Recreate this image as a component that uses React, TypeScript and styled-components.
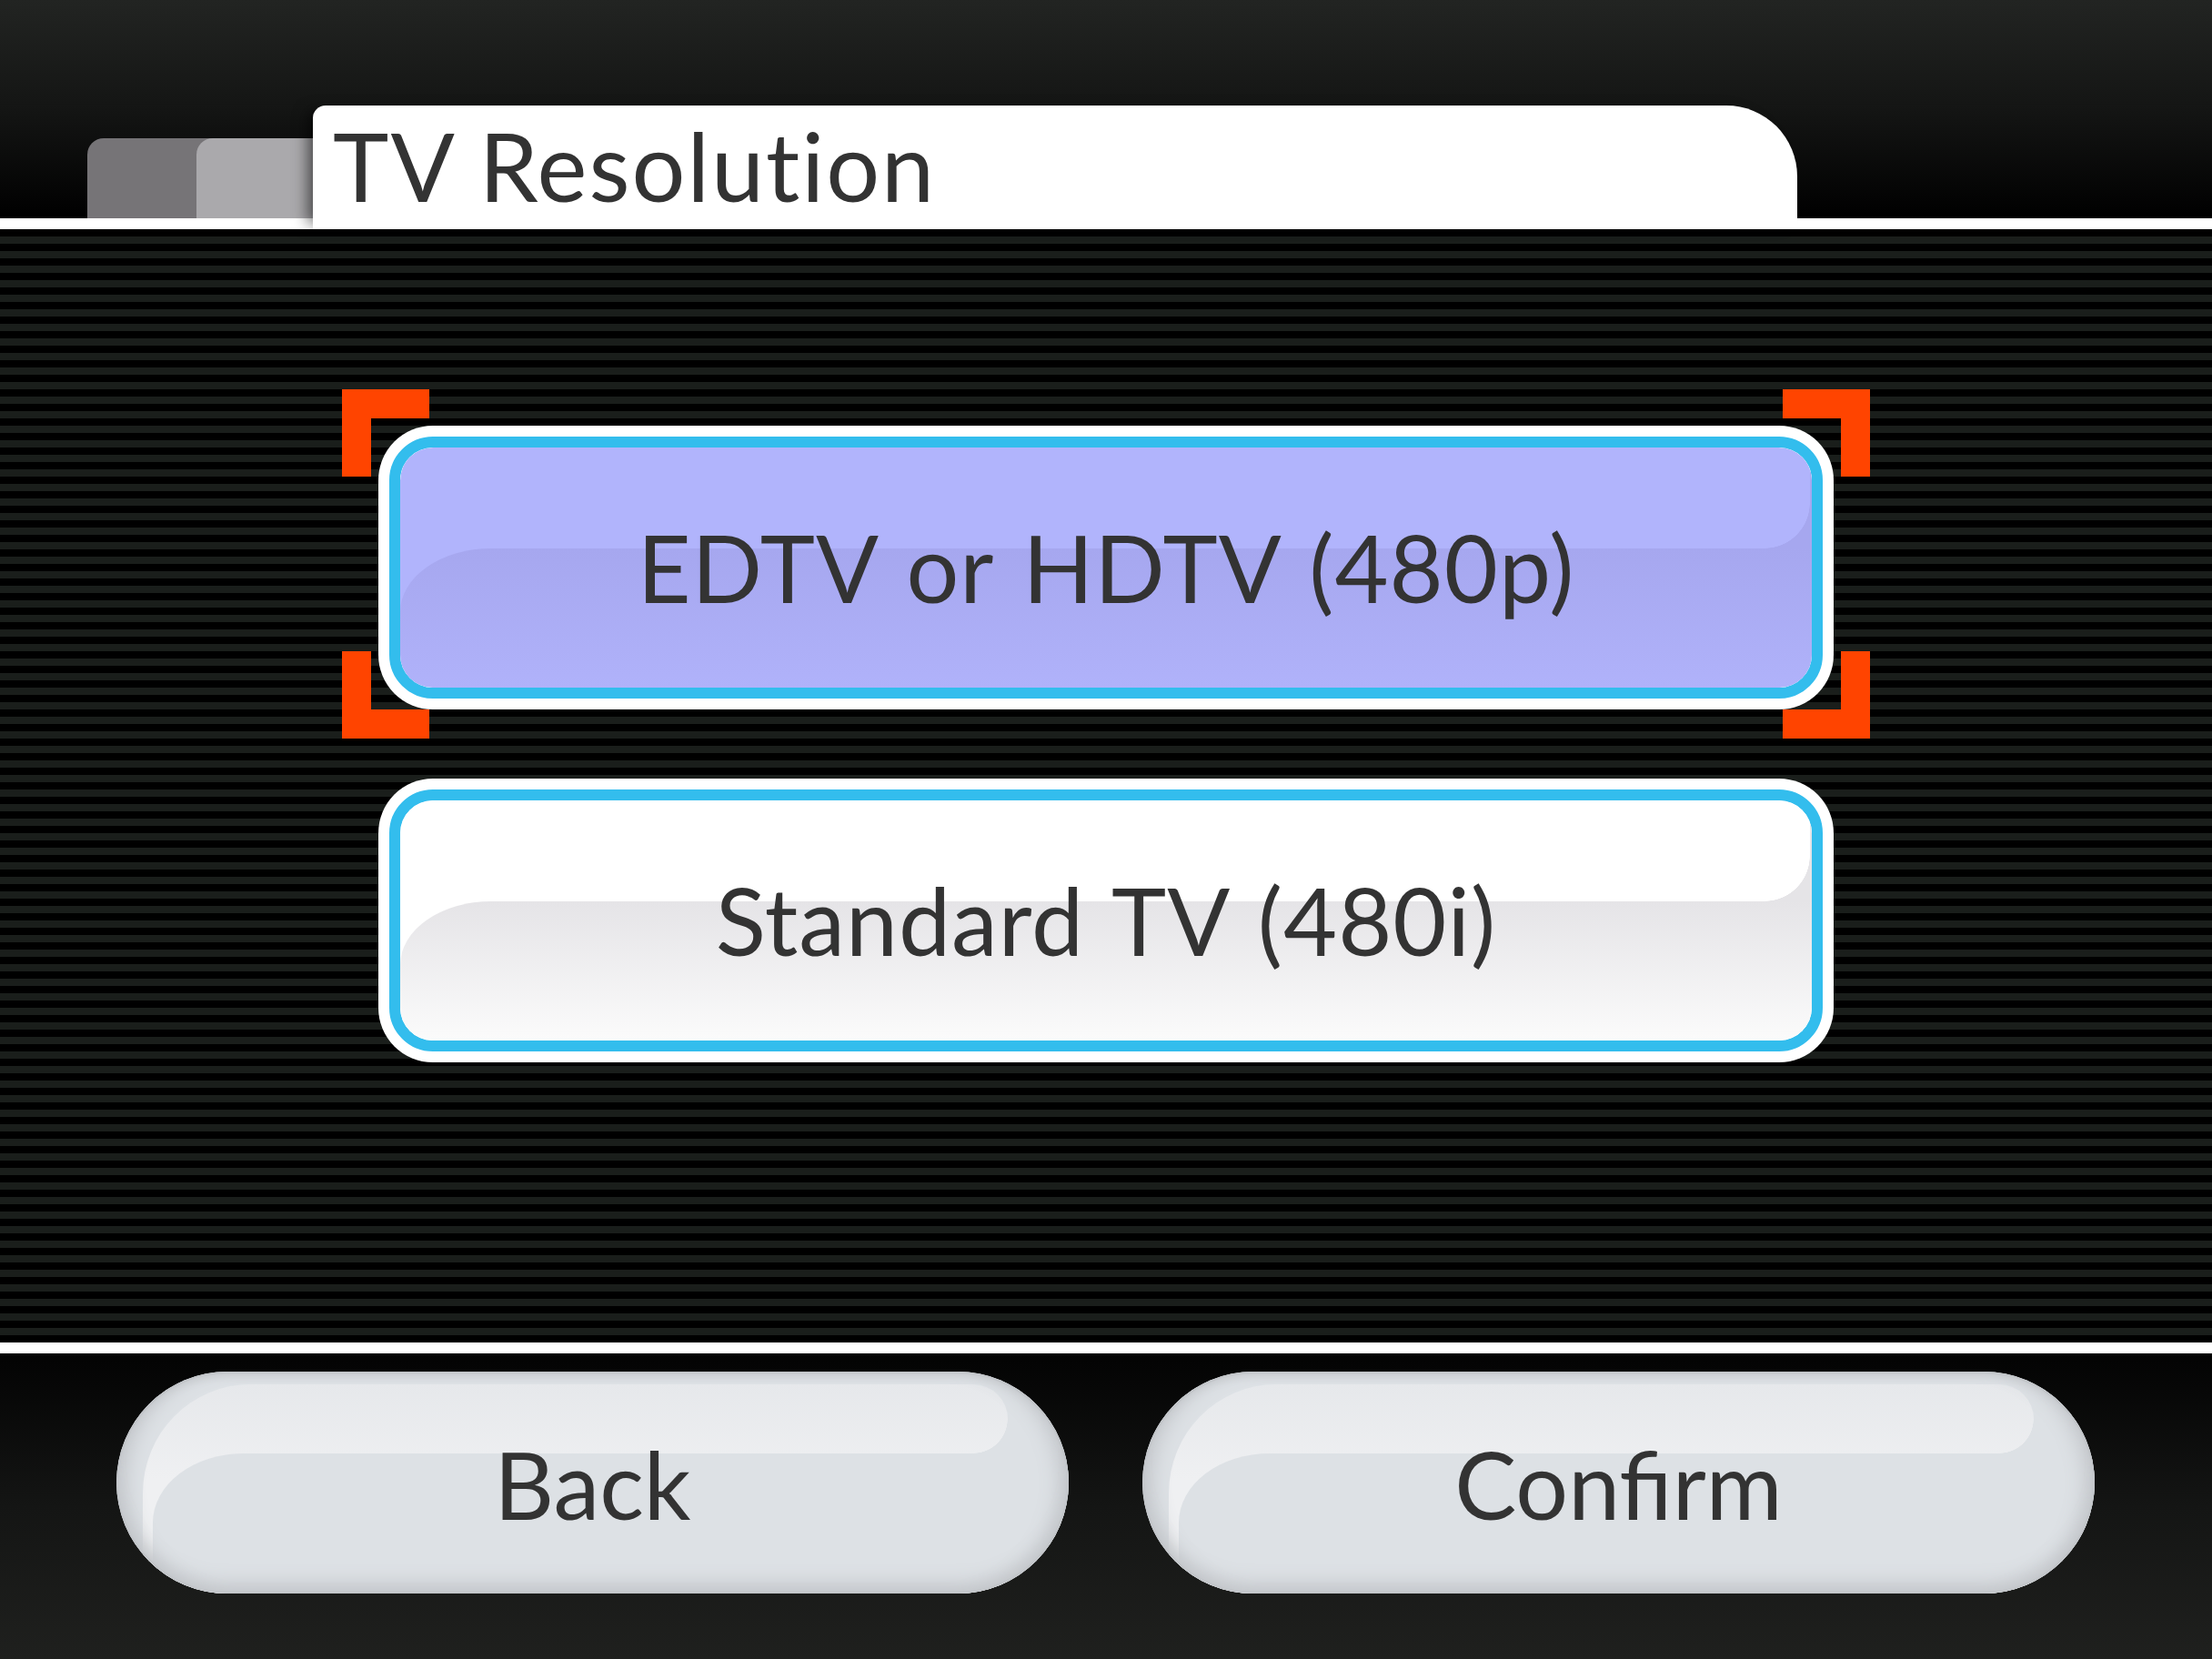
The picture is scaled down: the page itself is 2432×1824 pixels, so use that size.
import React from "react";
import styled, { createGlobalStyle } from "styled-components";

const Global = createGlobalStyle`
  html, body { margin: 0; padding: 0; background: #000; }
  body { font-family: Lato, "Open Sans", sans-serif; }
`;

const Screen = styled.div`
  width: 2432px;
  height: 1824px;
  display: flex;
  flex-direction: column;
  overflow: hidden;
  font-family: Lato, "Noto Sans", sans-serif;
  color: #333333;
`;

const Header = styled.header`
  height: 240px;
  flex: none;
  display: flex;
  align-items: flex-end;
  padding-left: 96px;
  box-sizing: border-box;
  background: linear-gradient(180deg, #222422 0%, #141514 50%, #000000 100%);
`;

const SideTab = styled.div<{ $shade: string; $w: number; $z: number }>`
  width: ${(p) => p.$w}px;
  height: 88px;
  margin-right: -18px;
  background: ${(p) => p.$shade};
  border-radius: 18px 0 0 0;
  position: relative;
  z-index: ${(p) => p.$z};
`;

const TitleTab = styled.div`
  width: 1632px;
  height: 136px;
  margin-bottom: -12px;
  box-sizing: border-box;
  background: #ffffff;
  border-radius: 14px 78px 0 0;
  position: relative;
  z-index: 3;
  box-shadow: -12px 0 16px -6px rgba(0, 0, 0, 0.55);
  padding-left: 22px;
  display: flex;
  align-items: flex-start;
`;

const Title = styled.h1`
  margin: 0;
  font-weight: 400;
  font-size: 104px;
  line-height: 1;
  letter-spacing: 2px;
  padding-top: 14px;
  color: #333333;
`;

const Rule = styled.div`
  height: 12px;
  flex: none;
  background: #ffffff;
`;

const Stage = styled.main`
  height: 1224px;
  flex: none;
  box-sizing: border-box;
  padding-top: 216px;
  display: flex;
  flex-direction: column;
  align-items: center;
  gap: 76px;
  background: repeating-linear-gradient(
    180deg,
    #000000 0px,
    #000000 8px,
    #1a1e1b 8px,
    #1a1e1b 16px
  );
`;

const OptionSlot = styled.div`
  position: relative;
`;

const Cursor = styled.div`
  position: absolute;
  top: -40px;
  left: -40px;
  right: -40px;
  bottom: -32px;
  pointer-events: none;
`;

const Corner = styled.span<{ $v: "top" | "bottom"; $h: "left" | "right" }>`
  position: absolute;
  width: 96px;
  height: 96px;
  box-sizing: border-box;
  ${(p) => p.$v}: 0;
  ${(p) => p.$h}: 0;
  border-${(p) => p.$v}: 32px solid #ff4400;
  border-${(p) => p.$h}: 32px solid #ff4400;
`;

const OptionOuter = styled.button`
  display: block;
  width: 1600px;
  height: 312px;
  box-sizing: border-box;
  padding: 12px;
  margin: 0;
  border: none;
  border-radius: 60px;
  background: #ffffff;
  cursor: pointer;
`;

const OptionRing = styled.div`
  width: 100%;
  height: 100%;
  box-sizing: border-box;
  border: 12px solid #33bded;
  border-radius: 48px;
  overflow: hidden;
`;

const OptionFace = styled.div<{ $light: string }>`
  position: relative;
  width: 100%;
  height: 100%;
  border-radius: 36px;
  overflow: hidden;
  background: ${(p) => p.$light};
  display: flex;
  align-items: center;
  justify-content: center;
`;

const OptionBand = styled.div<{ $top: string; $bottom: string }>`
  position: absolute;
  top: 111px;
  left: 0;
  right: 0;
  bottom: 0;
  border-top-left-radius: 100px 70px;
  background: linear-gradient(180deg, ${(p) => p.$top} 0%, ${(p) => p.$bottom} 100%);
  &::before {
    content: "";
    position: absolute;
    top: -50px;
    right: 2px;
    width: 50px;
    height: 50px;
    background: radial-gradient(circle at 0 0, transparent 49.5px, ${(p) => p.$top} 50px);
  }
  &::after {
    content: "";
    position: absolute;
    top: -111px;
    right: 0;
    width: 2px;
    height: 111px;
    background: ${(p) => p.$top};
  }
`;

const OptionLabel = styled.span`
  position: relative;
  font-family: Lato, "Noto Sans", sans-serif;
  font-size: 102px;
  line-height: 1;
  font-weight: 400;
  letter-spacing: 1px;
  word-spacing: 6px;
  color: #333333;
  white-space: nowrap;
`;

const Footer = styled.footer`
  flex: 1;
  box-sizing: border-box;
  padding: 20px 128px 0;
  display: flex;
  gap: 81px;
  background: linear-gradient(180deg, #030303 0%, #141514 50%, #1f201e 100%);
`;

const Pill = styled.button`
  position: relative;
  width: 1047px;
  height: 244px;
  margin: 0;
  padding: 0;
  border: none;
  border-radius: 122px / 122px;
  background: #dde1e5;
  overflow: hidden;
  display: flex;
  align-items: center;
  justify-content: center;
  cursor: pointer;
`;

const PillGloss = styled.span`
  position: absolute;
  top: 14px;
  left: 29px;
  right: 67px;
  bottom: 0;
  border-radius: 118px 38px 0 0 / 120px 38px 0 0;
  background: linear-gradient(180deg, #e6e8eb 0%, #eff0f2 45%, #eff0f2 100%);
`;

const PillBand = styled.span`
  position: absolute;
  top: 90px;
  left: 40px;
  right: 0;
  bottom: 0;
  border-top-left-radius: 100px 76px;
  background: #dde1e5;
  &::before {
    content: "";
    position: absolute;
    top: -38px;
    right: 67px;
    width: 38px;
    height: 38px;
    background: radial-gradient(circle at 0 0, transparent 37.5px, #dde1e5 38px);
  }
`;

const PillRim = styled.span`
  position: absolute;
  inset: 0;
  border-radius: inherit;
  pointer-events: none;
  box-shadow:
    inset 0 0 0 2px #c3c6ca,
    inset 0 10px 10px -6px #c6c9cd,
    inset 0 -22px 22px -12px #c3c6ca,
    inset 20px 0 22px -10px #c3c6ca,
    inset -20px 0 22px -10px #c3c6ca;
`;

const PillLabel = styled.span`
  position: relative;
  font-family: Lato, "Noto Sans", sans-serif;
  font-size: 102px;
  line-height: 1;
  color: #333333;
  margin-top: 4px;
`;

type Option = { label: string; selected: boolean };

const options: Option[] = [
  { label: "EDTV or HDTV (480p)", selected: true },
  { label: "Standard TV (480i)", selected: false },
];

function OptionButton({ label, selected }: Option) {
  return (
    <OptionSlot>
      <OptionOuter>
        <OptionRing>
          <OptionFace $light={selected ? "#b1b4fc" : "#ffffff"}>
            <OptionBand
              $top={selected ? "#a6a7ef" : "#e5e4e7"}
              $bottom={selected ? "#b0b2fa" : "#fbfbfb"}
            />
            <OptionLabel>{label}</OptionLabel>
          </OptionFace>
        </OptionRing>
      </OptionOuter>
      {selected && (
        <Cursor>
          <Corner $v="top" $h="left" />
          <Corner $v="top" $h="right" />
          <Corner $v="bottom" $h="left" />
          <Corner $v="bottom" $h="right" />
        </Cursor>
      )}
    </OptionSlot>
  );
}

function FooterButton({ label }: { label: string }) {
  return (
    <Pill>
      <PillGloss />
      <PillBand />
      <PillRim />
      <PillLabel>{label}</PillLabel>
    </Pill>
  );
}

export default function App() {
  return (
    <Screen>
      <Global />
      <Header>
        <SideTab $shade="#767477" $w={138} $z={1} />
        <SideTab $shade="#aaa9ac" $w={146} $z={2} />
        <TitleTab>
          <Title>TV Resolution</Title>
        </TitleTab>
      </Header>
      <Rule />
      <Stage>
        {options.map((o) => (
          <OptionButton key={o.label} {...o} />
        ))}
      </Stage>
      <Rule />
      <Footer>
        <FooterButton label="Back" />
        <FooterButton label="Confirm" />
      </Footer>
    </Screen>
  );
}
